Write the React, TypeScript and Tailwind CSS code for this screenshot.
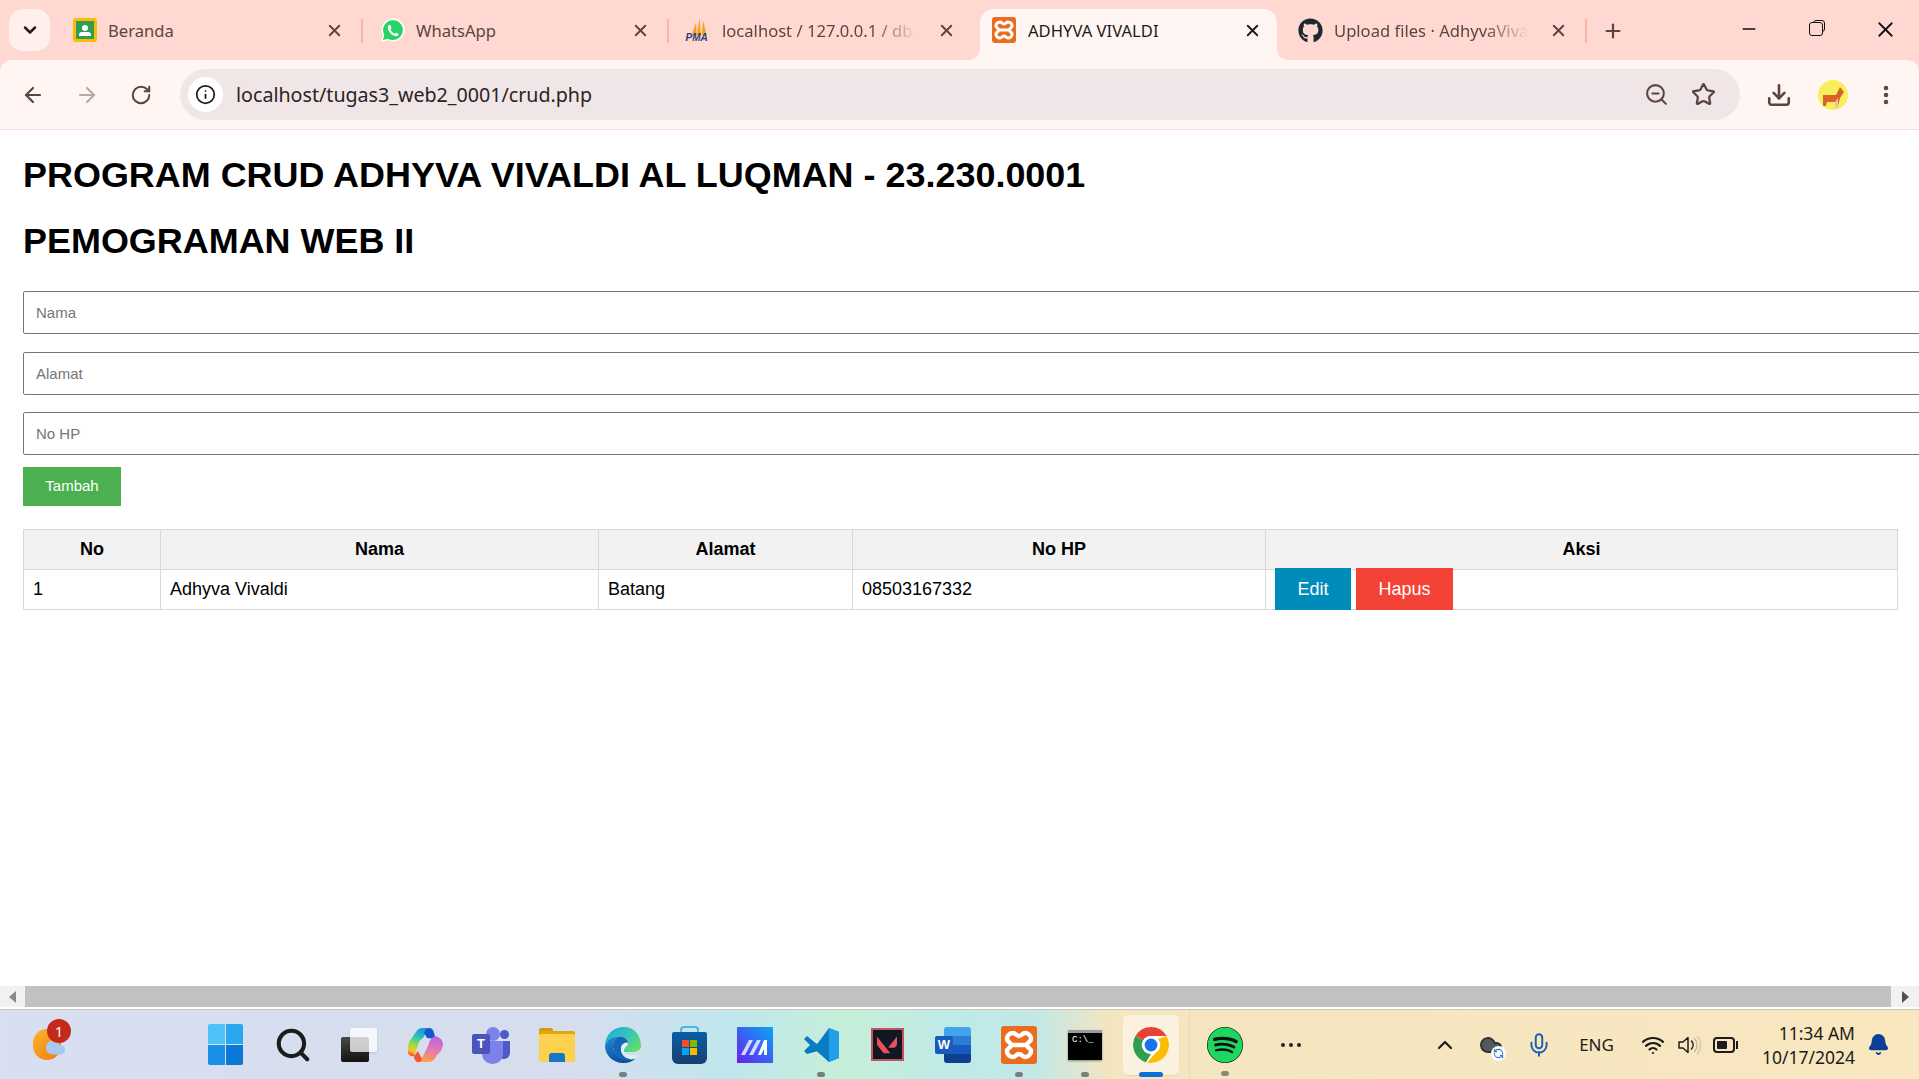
import { ArrowLeft, ArrowRight, Bell, ChevronDown, ChevronUp, Cloud, Download, Info, Mic, Minus, MoreVertical, Plus, RefreshCcw, RotateCw, Search, Star, Wifi, X, ZoomOut } from "lucide-react";
import { ReactNode } from "react";
import { FaGithub, FaSpotify } from "react-icons/fa";
import { SiValorant } from "react-icons/si";

const uiFont = "font-['Noto_Sans',sans-serif]";

function ClassroomIcon() {
  return (
    <div className="w-[24px] h-[24px] rounded-[3px] bg-[#fbbc04] p-[3px]">
      <div className="w-full h-full bg-[#2e9e57] flex flex-col items-center justify-center">
        <div className="w-[6px] h-[6px] rounded-full bg-white" />
        <div className="w-[12px] h-[4px] mt-[1px] rounded-t-[3px] bg-white" />
      </div>
    </div>
  );
}

function WhatsappIcon() {
  return (
    <svg viewBox="0 0 26 26" className="w-[25px] h-[25px]">
      <path d="M1 25 L3 18 A12 12 0 1 1 8 23Z" fill="#fff" />
      <path d="M3 23 L4.5 17.6 A10.3 10.3 0 1 1 8.4 21.5Z" fill="#25d366" />
      <path d="M9.5 7 C8 8 7.6 10 8.6 12.4 C10 15.6 12.6 18 15.6 18.8 C17.6 19.2 19 18.4 19.4 16.8 L16.8 15.2 L15.4 16.4 C13.4 15.6 11.6 13.8 10.8 12 L12 10.4 L10.8 7.4Z" fill="#fff" />
    </svg>
  );
}

function PmaIcon() {
  return (
    <div className="relative w-[25px] h-[24px]">
      <svg viewBox="0 0 25 24" className="w-[25px] h-[17px] absolute top-0 left-0">
        <path d="M3 24 L9 6 L10 24Z M10 24 L14 0 L16 24Z M17 24 L19 4 L24 24Z" fill="#f6a01d" />
      </svg>
      <span className="absolute left-0 bottom-[-2px] text-[10px] leading-[12px] font-bold italic text-[#2c3e7a] font-['Liberation_Sans',sans-serif]">PMA</span>
    </div>
  );
}

function XamppTile({ size }: { size: number }) {
  return (
    <div className="rounded-[3px] bg-[#ea6d1f] flex items-center justify-center" style={{ width: size, height: size + 2 }}>
      <svg viewBox="0 0 36 36" style={{ width: size, height: size }} fill="none" stroke="#fff" strokeWidth="4.5" strokeLinejoin="round">
        <path d="M12 6 C15 6 15 9 18 9 C21 9 21 6 24 6 A6 6 0 0 1 30 12 C30 15 26 15 26 18 C26 21 30 21 30 24 A6 6 0 0 1 24 30 C21 30 21 27 18 27 C15 27 15 30 12 30 A6 6 0 0 1 6 24 C6 21 10 21 10 18 C10 15 6 15 6 12 A6 6 0 0 1 12 6Z" />
        <path d="M10 18 H26" />
      </svg>
    </div>
  );
}

const tabs: { title: string; icon: ReactNode; active?: boolean; fade?: boolean; sep?: boolean; first?: boolean }[] = [
  { title: "Beranda", icon: <ClassroomIcon />, sep: true, first: true },
  { title: "WhatsApp", icon: <WhatsappIcon />, sep: true },
  { title: "localhost / 127.0.0.1 / db_crud", icon: <PmaIcon />, fade: true },
  { title: "ADHYVA VIVALDI", icon: <XamppTile size={24} />, active: true },
  { title: "Upload files · AdhyvaVivaldi", icon: <FaGithub size={25} color="#1f2a30" />, fade: true, sep: true },
];

function Tab({ title, icon, active, fade, sep, first }: (typeof tabs)[number]) {
  return (
    <div className={`relative w-[306px] h-[60px] shrink-0 flex items-center ${first ? "pl-[16px]" : "pl-[17px]"}`}>
      {active && (
        <>
          <div className="absolute left-[6px] right-[3px] top-[9px] bottom-0 rounded-t-[14px] bg-[#fff6f4]" />
          <svg viewBox="0 0 12 12" className="absolute left-[-6px] bottom-0 w-[12px] h-[12px]">
            <path d="M12 0 V12 H0 C7 12 12 7 12 0Z" fill="#fff6f4" />
          </svg>
          <svg viewBox="0 0 12 12" className="absolute right-[-9px] bottom-0 w-[12px] h-[12px]">
            <path d="M0 0 V12 H12 C5 12 0 7 0 0Z" fill="#fff6f4" />
          </svg>
        </>
      )}
      <div className="relative w-[26px] flex justify-center">{icon}</div>
      <div
        className={`relative mt-[2px] ${first ? "ml-[10px] w-[209px]" : "ml-[11px] w-[207px]"} overflow-hidden whitespace-nowrap text-[16.6px] ${active ? "text-[#1f1a19]" : "text-[#5c4541]"} ${fade ? "[mask-image:linear-gradient(to_right,black_72%,transparent_94%)]" : ""}`}
      >
        {title}
      </div>
      <X className="relative ml-[8px]" size={19} strokeWidth={2.4} color={active ? "#1f1a19" : "#5c4541"} />
      {sep && <div className="absolute right-[-1px] top-[19px] w-[2px] h-[24px] bg-[#ffb4a8]" />}
    </div>
  );
}

function CopilotIcon() {
  return (
    <svg viewBox="0 0 36 36" className="w-[36px] h-[36px]">
      <defs>
        <linearGradient id="cpa" x1="0.6" y1="0" x2="0.3" y2="1">
          <stop offset="0" stopColor="#1f8fe8" />
          <stop offset="0.35" stopColor="#30c9b0" />
          <stop offset="0.65" stopColor="#a8d83c" />
          <stop offset="0.85" stopColor="#f8c61e" />
          <stop offset="1" stopColor="#ee5a30" />
        </linearGradient>
        <linearGradient id="cpb" x1="0.6" y1="0" x2="0.4" y2="1">
          <stop offset="0" stopColor="#b268e0" />
          <stop offset="0.5" stopColor="#e374b8" />
          <stop offset="1" stopColor="#fba04c" />
        </linearGradient>
      </defs>
      <path d="M22 1 H16 Q11 1 9 5 L2 15 Q0 20 1 26 Q3 30 7 29 L11 18 Q12 13 16 11Z" fill="url(#cpa)" />
      <path d="M22 1 Q26 1 27 6 L29 12 L20 11 Q18 7 17 6 Q19 1 22 1Z" fill="#1458d0" />
      <path d="M28 9 Q36 11 36 18 Q35 24 30 28 Q27 35 22 35 H15 Q12 35 15 31 L21 19 Q23 11 28 9Z" fill="url(#cpb)" />
      <path d="M7 29 L11 24 L15 32 Q14 36 10 35 Q7 33 7 29Z" fill="#f0562f" />
    </svg>
  );
}

function TeamsIcon() {
  return (
    <div className="relative w-[38px] h-[36px]">
      <div className="absolute left-[14px] top-0 w-[14px] h-[14px] rounded-full bg-[#7b83eb]" />
      <div className="absolute right-[1px] top-[3px] w-[9px] h-[9px] rounded-full bg-[#5059c9]" />
      <div className="absolute right-0 top-[14px] w-[13px] h-[18px] rounded-b-[6px] bg-[#5059c9]" />
      <div className="absolute left-[10px] top-[14px] w-[21px] h-[23px] rounded-b-[10px] bg-[#7b83eb]" />
      <div className="absolute left-0 top-[7px] w-[18px] h-[20px] rounded-[2px] bg-[#4b53bc] flex items-center justify-center text-white text-[13px] font-bold font-['Liberation_Sans',sans-serif]">T</div>
    </div>
  );
}

function FilesIcon() {
  return (
    <div className="relative w-[36px] h-[34px]">
      <div className="absolute left-0 top-0 w-[14px] h-[8px] rounded-t-[2px] bg-[#d99c08]" />
      <div className="absolute left-0 top-[3px] right-0 h-[8px] rounded-t-[2px] bg-[#e0a80f]" />
      <div className="absolute left-0 right-0 top-[6px] bottom-0 rounded-[2px] bg-[#fdd04e]" />
      <div className="absolute left-[10px] right-[10px] bottom-0 h-[9px] rounded-t-[3px] bg-[#1677c9]" />
    </div>
  );
}

function EdgeIcon() {
  return (
    <svg viewBox="0 0 38 38" className="w-[38px] h-[38px]">
      <defs>
        <linearGradient id="ega" x1="0" y1="0" x2="1" y2="0.7">
          <stop offset="0" stopColor="#1fa8dc" />
          <stop offset="0.6" stopColor="#36c8b4" />
          <stop offset="1" stopColor="#66dc66" />
        </linearGradient>
        <linearGradient id="egb" x1="0.2" y1="0" x2="0.7" y2="1">
          <stop offset="0" stopColor="#1a86d4" />
          <stop offset="1" stopColor="#0b4a96" />
        </linearGradient>
      </defs>
      <path d="M1 20 C1 8 10 1 20 1 C30 1 37 9 37 20 C37 24 33 26 27 26 L20 26 C18 22 24 21 24 17 C24 13 19 10 14 11 C7 12 2 16 1 20Z" fill="url(#ega)" />
      <path d="M1 20 C3 13 9 11 14 11 C9 14 8 20 10 25 C13 32 22 37 32 32 C28 36 24 37 19 37 C9 37 1 29 1 20Z" fill="url(#egb)" />
      <path d="M14 11 C19 10 24 13 24 17 C21 16 17 18 17 23 C17 29 22 33 28 33 C20 37 12 31 10 25 C8 20 9 14 14 11Z" fill="#1466b8" />
      <path d="M17 23 C17 18 21 16 24 17 C24 20 19 22 20 26 C22 29 28 30 33 29 L32 32 C26 35 17 31 17 23Z" fill="#dff0f0" />
    </svg>
  );
}

function StoreIcon() {
  return (
    <div className="relative w-[35px] h-[38px]">
      <div className="absolute left-[8px] right-[8px] top-0 h-[10px] rounded-t-[4px] border-2 border-b-0 border-[#4db7e6]" />
      <div className="absolute left-0 right-0 top-[6px] bottom-0 rounded-b-[6px] rounded-t-[2px] bg-[linear-gradient(180deg,#0a5ea8,#173f6e)] flex items-center justify-center">
        <div className="grid grid-cols-2 gap-[1px]">
          <div className="w-[7px] h-[7px] bg-[#f25022]" />
          <div className="w-[7px] h-[7px] bg-[#7fba00]" />
          <div className="w-[7px] h-[7px] bg-[#00a4ef]" />
          <div className="w-[7px] h-[7px] bg-[#ffb900]" />
        </div>
      </div>
    </div>
  );
}

function MaIcon() {
  return (
    <svg viewBox="0 0 36 36" className="w-[36px] h-[36px]">
      <defs>
        <linearGradient id="maa" x1="1" y1="0" x2="0" y2="1">
          <stop offset="0" stopColor="#05a8f5" />
          <stop offset="1" stopColor="#6a1ff0" />
        </linearGradient>
      </defs>
      <rect width="36" height="36" fill="url(#maa)" />
      <path d="M4 28 L12 13 H16 L8 28Z M12 28 L20 13 H24 L16 28Z" fill="#d9d6ff" />
      <path d="M21 28 L27 13 H30 V28 H27 V22 L24 28Z" fill="#fff" />
    </svg>
  );
}

function VscodeIcon() {
  return (
    <svg viewBox="0 0 36 36" className="w-[36px] h-[40px]">
      <path d="M26 1 L36 5 V31 L26 35 L9 20 L15 16Z" fill="#0a7cc4" />
      <path d="M26 1 L36 5 V31 L26 35Z" fill="#22a0e8" />
      <path d="M1 12 L4 9 L26 27 V35 L15 24 L4 27 L1 24 L7 18Z" fill="#0a7cc4" />
    </svg>
  );
}

function WordIcon() {
  return (
    <div className="relative w-[36px] h-[36px]">
      <div className="absolute right-0 top-0 w-[27px] h-[36px] rounded-[3px] overflow-hidden flex flex-col">
        <div className="flex-1 bg-[#41a5ee]" />
        <div className="flex-1 bg-[#2b7cd3]" />
        <div className="flex-1 bg-[#185abd]" />
        <div className="flex-1 bg-[#103f91]" />
      </div>
      <div className="absolute left-0 top-[9px] w-[18px] h-[18px] rounded-[2px] bg-[#185abd] flex items-center justify-center text-white text-[13px] font-bold font-['Liberation_Sans',sans-serif]">W</div>
    </div>
  );
}

function ChromeIcon() {
  return (
    <svg viewBox="0 0 36 36" className="w-[36px] h-[36px]">
      <circle cx="18" cy="18" r="18" fill="#fff" />
      <path d="M18 0 A18 18 0 0 1 33.6 9 H18 A9 9 0 0 0 10 13.5 L2.6 8.8 A18 18 0 0 1 18 0Z" fill="#ea4335" />
      <path d="M2.6 8.8 L10 13.5 A9 9 0 0 0 18 27 L13 35.3 A18 18 0 0 1 2.6 8.8Z" fill="#2f9e4f" />
      <path d="M33.6 9 A18 18 0 0 1 14 35.5 L22.5 26 A9 9 0 0 0 25 12 Z" fill="#fbbc04" />
      <circle cx="18" cy="18" r="8" fill="#fff" />
      <circle cx="18" cy="18" r="6.4" fill="#1a73e8" />
    </svg>
  );
}

function CmdIcon() {
  return (
    <div className="w-[34px] h-[30px] bg-black border-t-[3px] border-[#9b9b9b] shadow-[0_1px_2px_#0006] pl-[4px] text-white text-[9px] leading-[14px] font-['Liberation_Mono',monospace] whitespace-nowrap">
      C:\_
    </div>
  );
}

function SpeakerIcon() {
  return (
    <svg viewBox="0 0 26 24" className="w-[26px] h-[24px]" fill="none" strokeLinecap="round">
      <path d="M2 9 H6 L11 4.5 V19.5 L6 15 H2Z" stroke="#1c1c1c" strokeWidth="1.5" strokeLinejoin="round" />
      <path d="M14.5 8 A6 6 0 0 1 14.5 16" stroke="#1c1c1c" strokeWidth="1.5" />
      <path d="M17.5 5.5 A9.5 9.5 0 0 1 17.5 18.5" stroke="#b9b09a" strokeWidth="1.2" />
      <path d="M20.5 3.5 A13 13 0 0 1 20.5 20.5" stroke="#cfc6ae" strokeWidth="1.2" />
    </svg>
  );
}

const dock: { key: string; icon: ReactNode; dot?: boolean; active?: boolean }[] = [
  { key: "search", icon: <Search size={38} strokeWidth={2.6} color="#1c1c1c" /> },
  { key: "task", icon: (
    <div className="relative w-[36px] h-[34px]">
      <div className="absolute left-0 bottom-0 w-[28px] h-[25px] rounded-[2px] bg-[linear-gradient(180deg,#4a4a4a,#111)]" />
      <div className="absolute right-0 top-0 w-[27px] h-[24px] rounded-[2px] bg-white/75 shadow-sm" />
    </div>
  ) },
  { key: "copilot", icon: <CopilotIcon /> },
  { key: "teams", icon: <TeamsIcon /> },
  { key: "files", icon: <FilesIcon /> },
  { key: "edge", icon: <EdgeIcon />, dot: true },
  { key: "store", icon: <StoreIcon /> },
  { key: "ma", icon: <MaIcon /> },
  { key: "vscode", icon: <VscodeIcon />, dot: true },
  { key: "valorant", icon: (
    <div className="w-[33px] h-[33px] bg-[#111823] border-2 border-[#c4525f] flex items-center justify-center">
      <SiValorant size={20} color="#e8505b" />
    </div>
  ) },
  { key: "word", icon: <WordIcon /> },
  { key: "xampp", icon: <XamppTile size={36} />, dot: true },
  { key: "cmd", icon: <CmdIcon />, dot: true },
  { key: "chrome", icon: <ChromeIcon />, active: true },
];

function DockItem({ icon, dot, active }: (typeof dock)[number]) {
  return (
    <div className="relative w-[66px] h-[70px] flex items-center justify-center">
      {active && <div className="absolute left-[5px] right-[5px] top-[5px] bottom-[5px] rounded-[5px] bg-[#faf2df] shadow-[0_1px_1px_#0001]" />}
      <div className="relative">{icon}</div>
      {dot && <div className="absolute left-[29px] bottom-[3px] w-[8px] h-[5px] rounded-full bg-[#78807f]" />}
      {active && <div className="absolute left-[21px] bottom-[3px] w-[24px] h-[5px] rounded-full bg-[#0a6fd6]" />}
    </div>
  );
}

export default function App() {
  return (
    <div className={`w-[1919px] h-[1079px] overflow-hidden flex flex-col bg-white ${uiFont}`}>
      {/* tab strip */}
      <div className="h-[60px] shrink-0 bg-[#fed8d1] flex">
        <div className="w-[56px] shrink-0 pl-[9px] pt-[9px]">
          <div className="w-[41px] h-[42px] rounded-[14px] bg-[#fff0ed] flex items-center justify-center">
            <ChevronDown size={20} strokeWidth={3} color="#2a1d1b" />
          </div>
        </div>
        {tabs.map((t) => (
          <Tab key={t.title} {...t} />
        ))}
        <Plus className="ml-[16px] mt-[20px]" size={22} strokeWidth={2.4} color="#5c4541" />
        <div className="ml-auto flex items-start">
          <div className="w-[64px] h-[58px] flex items-center justify-center"><Minus size={20} strokeWidth={1.8} color="#111" /></div>
          <div className="w-[70px] h-[58px] flex items-center justify-center">
            <div className="relative w-[14px] h-[14px]">
              <div className="absolute right-[-2px] top-[-2px] w-[12px] h-[12px] rounded-[3px] border-[1.5px] border-[#111]" />
              <div className="absolute inset-0 rounded-[3px] border-[1.5px] border-[#111] bg-[#fed8d1]" />
            </div>
          </div>
          <div className="w-[68px] h-[58px] flex items-center justify-center"><X size={25} strokeWidth={1.7} color="#111" /></div>
        </div>
      </div>

      {/* toolbar */}
      <div className="h-[70px] shrink-0 bg-[#fed8d1]">
        <div className="h-full bg-[#fff6f4] rounded-t-[12px] border-b border-[#f9dfda] flex items-center">
          <div className="w-[180px] flex items-center pl-[21px] gap-[30px]">
            <ArrowLeft size={24} strokeWidth={2.2} color="#5c4541" />
            <ArrowRight size={24} strokeWidth={2.2} color="#b9aaa7" />
            <RotateCw className="ml-[1px]" size={22} strokeWidth={2.2} color="#5c4541" />
          </div>
          <div className="w-[1560px] h-[51px] rounded-full bg-[#f1e6e7] flex items-center pl-[8px] pr-[24px]">
            <div className="w-[35px] h-[35px] rounded-full bg-white flex items-center justify-center">
              <Info size={21} strokeWidth={2} color="#1f1a19" />
            </div>
            <div className="ml-[13px] text-[19.65px] text-[#2b2321]">localhost/tugas3_web2_0001/crud.php</div>
            <ZoomOut className="ml-auto" size={25} strokeWidth={2} color="#5c4541" />
            <Star className="ml-[22px]" size={25} strokeWidth={2.2} color="#5c4541" />
          </div>
          <Download className="ml-[26px]" size={26} strokeWidth={2.4} color="#5c4541" />
          <div className="relative ml-[26px] w-[30px] h-[30px] rounded-full bg-[#f8ef5b] overflow-hidden">
            <svg viewBox="0 0 30 30" className="w-[30px] h-[30px]">
              <path d="M5 15 H18 L22 7 L26 12 L22 18 L20 26 H17 V22 H9 L8 26 H5Z" fill="#d9622b" />
              <path d="M17 22 L20 18 L20 28 H17Z" fill="#e8c9a0" />
            </svg>
          </div>
          <MoreVertical className="ml-[26px]" size={24} strokeWidth={2.6} color="#5c4541" />
        </div>
      </div>

      {/* page */}
      <div className="flex-1 min-h-0 overflow-hidden pl-[23px] font-['Liberation_Sans',Arial,sans-serif] text-black">
        <h2 className="mt-[24px] text-[35.95px] leading-[42px] font-bold whitespace-nowrap">PROGRAM CRUD ADHYVA VIVALDI AL LUQMAN - 23.230.0001</h2>
        <h2 className="mt-[24px] text-[35.95px] leading-[42px] font-bold">PEMOGRAMAN WEB II</h2>
        <form className="mt-[29px] flex flex-col">
          <input placeholder="Nama" className="w-[1960px] h-[43px] px-[12px] rounded-[2px] border border-[#767676] text-[15px] placeholder:text-[#757575] outline-none" />
          <input placeholder="Alamat" className="mt-[18px] w-[1960px] h-[43px] px-[12px] rounded-[2px] border border-[#767676] text-[15px] placeholder:text-[#757575] outline-none" />
          <input placeholder="No HP" className="mt-[17px] w-[1960px] h-[43px] px-[12px] rounded-[2px] border border-[#767676] text-[15px] placeholder:text-[#757575] outline-none" />
        </form>
        <button className="block mt-[12px] w-[98px] h-[39px] bg-[#4caf50] text-white text-[15px]">Tambah</button>
        <table className="mt-[23px] w-[1875px] table-fixed border-collapse text-[18px]">
          <colgroup>
            <col className="w-[137px]" />
            <col className="w-[438px]" />
            <col className="w-[254px]" />
            <col className="w-[413px]" />
            <col />
          </colgroup>
          <thead>
            <tr className="h-[40px] bg-[#f2f2f2]">
              {["No", "Nama", "Alamat", "No HP", "Aksi"].map((h) => (
                <th key={h} className="border border-[#d8d8d8] font-bold text-center">{h}</th>
              ))}
            </tr>
          </thead>
          <tbody>
            <tr className="h-[40px]">
              <td className="border border-[#d8d8d8] px-[9px]">1</td>
              <td className="border border-[#d8d8d8] px-[9px]">Adhyva Vivaldi</td>
              <td className="border border-[#d8d8d8] px-[9px]">Batang</td>
              <td className="border border-[#d8d8d8] px-[9px]">08503167332</td>
              <td className="border border-[#d8d8d8] px-[9px] py-0">
                <div className="flex gap-[5px] h-[38px] -mt-[1px] items-center">
                  <button className="w-[76px] h-[42px] bg-[#008cba] text-white">Edit</button>
                  <button className="w-[97px] h-[42px] bg-[#f44336] text-white">Hapus</button>
                </div>
              </td>
            </tr>
          </tbody>
        </table>
      </div>

      {/* horizontal scrollbar */}
      <div className="h-[23px] shrink-0 bg-white">
        <div className="h-[21px] bg-[#f1f1f1] flex items-center">
          <div className="w-[25px] flex justify-center">
            <div className="w-0 h-0 border-y-[6px] border-y-transparent border-r-[7px] border-r-[#8a8a8a]" />
          </div>
          <div className="w-[1866px] h-full bg-[#c1c1c1]" />
          <div className="flex-1 flex justify-center">
            <div className="w-0 h-0 border-y-[6px] border-y-transparent border-l-[7px] border-l-[#505050]" />
          </div>
        </div>
      </div>

      {/* taskbar */}
      <div className="relative h-[70px] shrink-0 flex items-center border-t border-[#c9c4b8] bg-[linear-gradient(90deg,#d7dff0_0%,#d6deee_30%,#c0e6ee_38%,#c6efd9_44%,#bfeae8_50%,#c3e8e6_54%,#f5e5c0_58%,#f8e7bf_100%)]">
        <div className="relative w-[192px] h-full shrink-0">
          <div className="absolute left-[33px] top-[19px] w-[28px] h-[31px] rounded-full bg-[linear-gradient(135deg,#f8b62d,#f47a12)]" />
          <Cloud className="absolute left-[45px] top-[27px]" size={21} fill="#a9c8ee" color="#a9c8ee" />
          <div className="absolute left-[47px] top-[9px] w-[24px] h-[24px] rounded-full bg-[#c4291c] text-white text-[14px] flex items-center justify-center">1</div>
        </div>
        <div className="w-[68px] h-[70px] flex items-center justify-center pr-[2px]">
          <div className="grid grid-cols-2 gap-[1px] w-[35px]">
            <div className="h-[20px] rounded-tl-[2px] bg-[#4fc3f7]" />
            <div className="h-[20px] rounded-tr-[2px] bg-[#29a8ee]" />
            <div className="h-[20px] rounded-bl-[2px] bg-[#1a8fe6]" />
            <div className="h-[20px] rounded-br-[2px] bg-[#0a78d7]" />
          </div>
        </div>
        {dock.map((d) => (
          <DockItem key={d.key} {...d} />
        ))}
        <div className="w-[1px] h-full ml-[5px] bg-[#ebdcb8]" />
        <div className="relative ml-[2px] w-[66px] h-full flex items-center justify-center">
          <FaSpotify size={36} color="#1ed760" className="bg-[#111] rounded-full" />
          <div className="absolute left-[29px] bottom-[3px] w-[8px] h-[5px] rounded-full bg-[#8a8a78]" />
        </div>
        <div className="w-[66px] flex justify-center gap-[4px]">
          <div className="w-[4px] h-[4px] rounded-full bg-[#222]" />
          <div className="w-[4px] h-[4px] rounded-full bg-[#222]" />
          <div className="w-[4px] h-[4px] rounded-full bg-[#222]" />
        </div>
        <div className="ml-auto flex items-center text-[#1c1c1c]">
          <ChevronUp size={24} strokeWidth={2.2} />
          <div className="relative ml-[22px] w-[24px] h-[24px]">
            <Cloud size={24} fill="#55595c" color="#333" />
            <div className="absolute right-[-3px] bottom-[-4px] w-[15px] h-[15px] rounded-full bg-white flex items-center justify-center">
              <RefreshCcw size={11} strokeWidth={2.5} color="#2a7fd6" />
            </div>
          </div>
          <Mic className="ml-[23px]" size={26} strokeWidth={1.8} color="#1b5fb3" />
          <div className="ml-[27px] text-[17px]">ENG</div>
          <Wifi className="ml-[27px]" size={24} strokeWidth={2.2} />
          <div className="ml-[12px]"><SpeakerIcon /></div>
          <div className="ml-[10px] relative w-[22px] h-[16px] rounded-[4px] border-2 border-[#1c1c1c] p-[2px] mr-[2px]">
            <div className="w-[10px] h-full bg-[#1c1c1c] rounded-[1px]" />
            <div className="absolute right-[-5px] top-[2px] w-[2px] h-[8px] bg-[#1c1c1c]" />
          </div>
          <div className="ml-[25px] text-right text-[17.5px] leading-[24px]">
            <div>11:34 AM</div>
            <div>10/17/2024</div>
          </div>
          <Bell className="ml-[12px] mr-[29px]" size={23} fill="#0c3f96" color="#0c3f96" />
        </div>
      </div>
    </div>
  );
}
